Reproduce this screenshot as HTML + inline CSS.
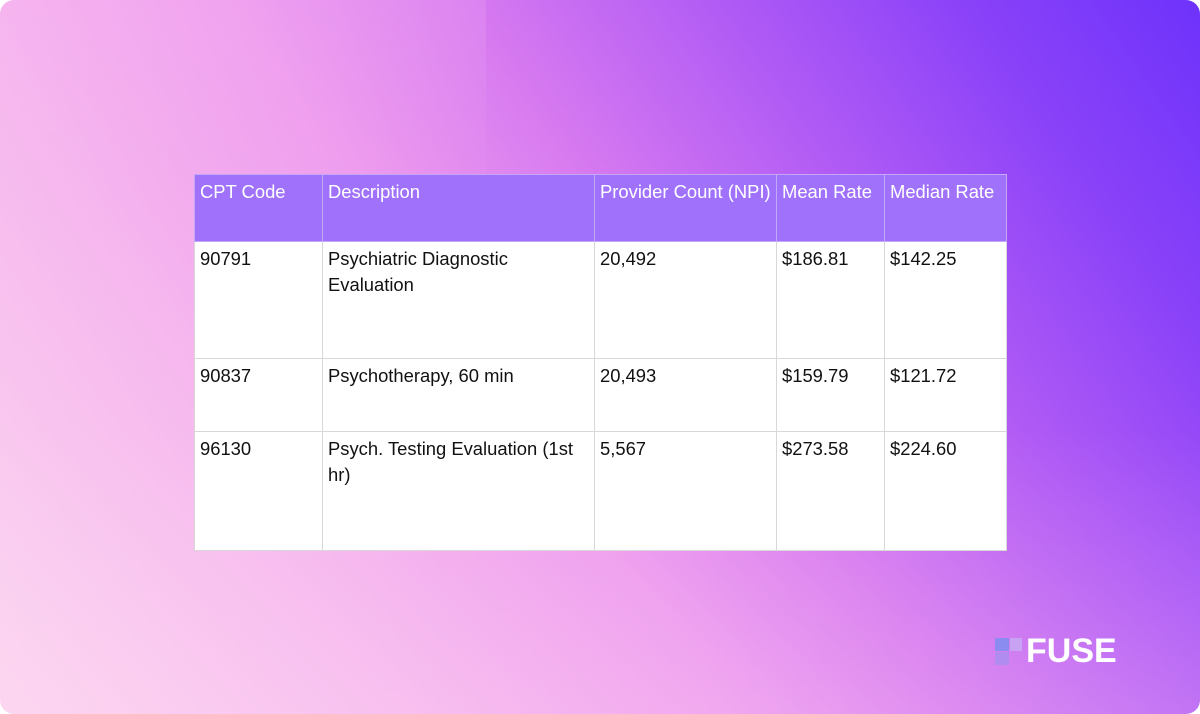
<!DOCTYPE html>
<html><head><style>
html,body{margin:0;padding:0;background:#fff;}
.bg{position:relative;width:1200px;height:714px;border-radius:14px;overflow:hidden;
background:linear-gradient(55deg,#fcd6f0 0%,#f6b8ee 25%,#ee9cee 43%,#d679f0 57%,#b05af5 72%,#8a42f8 86%,#6e32fb 100%);}
.sh1{position:absolute;left:0;top:0;width:486px;height:200px;
background:linear-gradient(180deg,rgba(255,200,245,0.15),rgba(255,200,245,0));}
.sh2{position:absolute;left:0;top:0;width:1200px;height:714px;background:linear-gradient(0deg,rgba(255,220,245,0.18),rgba(255,220,245,0) 40%);}
table{position:absolute;left:194px;top:174px;border-collapse:collapse;font-family:"Liberation Sans",sans-serif;font-size:18.4px;color:#111;}
td,th{border:1px solid #d8d8d8;vertical-align:top;text-align:left;padding:4px 5px;font-weight:normal;line-height:26px;box-sizing:border-box;}
th{background:#a072fb;color:#fff;border-color:#c4a8f8;}
td{background:#fff;}
.logo{position:absolute;top:632px;font-family:"Liberation Sans",sans-serif;font-weight:bold;font-size:34px;color:#fff;}
</style></head><body>
<div class="bg">
<div class="sh1"></div><div class="sh2"></div>
<table>
<tr style="height:67px"><th style="width:128px">CPT Code</th><th style="width:272px">Description</th><th style="width:182px">Provider Count (NPI)</th><th style="width:108px">Mean Rate</th><th style="width:122px">Median Rate</th></tr>
<tr style="height:117px"><td>90791</td><td>Psychiatric Diagnostic Evaluation</td><td>20,492</td><td>$186.81</td><td>$142.25</td></tr>
<tr style="height:73px"><td>90837</td><td>Psychotherapy, 60 min</td><td>20,493</td><td>$159.79</td><td>$121.72</td></tr>
<tr style="height:119px"><td>96130</td><td>Psych. Testing Evaluation (1st hr)</td><td>5,567</td><td>$273.58</td><td>$224.60</td></tr>
</table>
<svg style="position:absolute;left:995px;top:638px" width="30" height="28">
<rect x="0" y="0" width="14" height="13" fill="#8a8cf0"/>
<rect x="15" y="0" width="12" height="13" fill="#c9a3f3"/>
<rect x="0" y="14" width="14" height="13" fill="#b08cf0"/>
</svg>
<div class="logo" style="left:1026px">FUSE</div>
</div>
</body></html>
